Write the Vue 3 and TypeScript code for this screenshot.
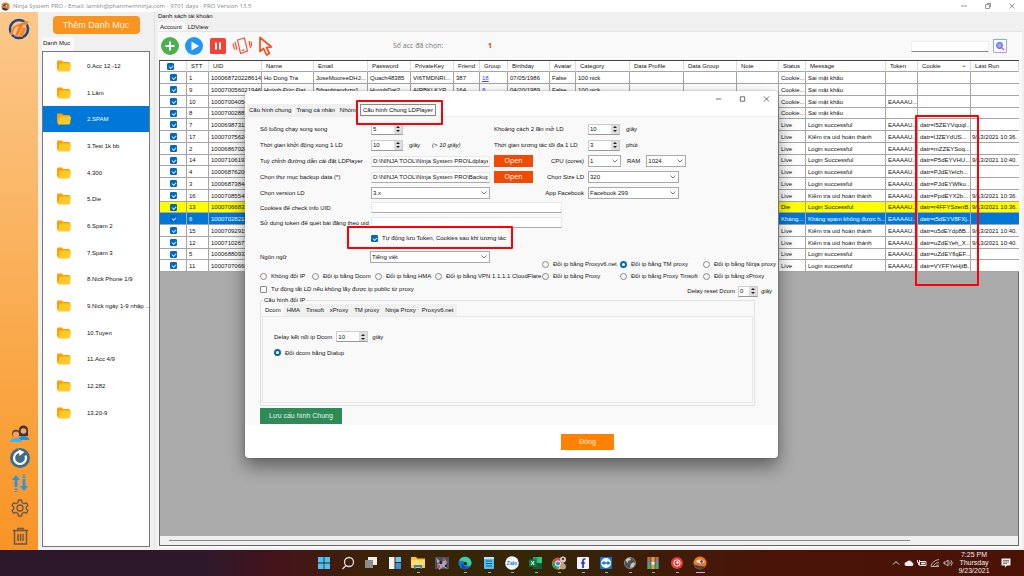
<script setup lang="ts">
import { ref } from 'vue'

interface Row {
  stt: number
  uid: string
  status: string
  message: string
  token: string
  cookie: string
  lastRun: string
  extra?: string[]
  state?: string
}

const T = 'EAAAAU...'
const OK = 'Login successful'
const DONE = 'Kiểm tra uid hoàn thành'
const BAD = 'Sai mật khẩu'

const headers = ['STT', 'UID', 'Name', 'Email', 'Password', 'PrivateKey', 'Friend', 'Group', 'Birthday', 'Avatar', 'Category', 'Data Profile', 'Data Group', 'Note', 'Status', 'Message', 'Token', 'Cookie', 'Last Run']
const widths = [27, 22, 53, 52, 54, 43, 43, 26, 28, 42, 26, 54, 54, 53, 42, 27, 80, 32, 53, 48]

const rows: Row[] = [
  { stt: 1, uid: '100068720228614', status: 'Cookie...', message: BAD, token: '', cookie: '', lastRun: '', extra: ['Ho Dong Tra', 'JoseMooreeDHJ...', 'Quach48385', 'VI6TMDNRI...', '387', '18', '07/05/1986', 'False', '100 nick'] },
  { stt: 9, uid: '100070056021946', status: 'Cookie...', message: BAD, token: '', cookie: '', lastRun: '', extra: ['Huỳnh Đức Đạt', '5thanhtandyzn1', 'HuynhDat2', 'AIRBKLKYP...', '164', '8', '04/20/1989', 'False', '100 nick'] },
  { stt: 10, uid: '10007004054', status: 'Cookie...', message: BAD, token: T, cookie: '', lastRun: '' },
  { stt: 8, uid: '10007002887', status: 'Cookie...', message: BAD, token: '', cookie: '', lastRun: '' },
  { stt: 7, uid: '10006987311', status: 'Live', message: OK, token: T, cookie: 'datr=I5ZEYVquqI...', lastRun: '' },
  { stt: 17, uid: '10007075624', status: 'Live', message: DONE, token: T, cookie: 'datr=lJZEYdUS...', lastRun: '9/13/2021 10:36.' },
  { stt: 2, uid: '10006867028', status: 'Live', message: OK, token: T, cookie: 'datr=mZZEYSoq...', lastRun: '' },
  { stt: 14, uid: '10007106193', status: 'Live', message: 'Login Successful', token: T, cookie: 'datr=P5dEYVHU...', lastRun: '9/13/2021 10:40.' },
  { stt: 4, uid: '10006876204', status: 'Live', message: OK, token: T, cookie: 'datr=PJdEYeIch...', lastRun: '' },
  { stt: 3, uid: '10006873844', status: 'Live', message: OK, token: T, cookie: 'datr=PJdEYWfku...', lastRun: '' },
  { stt: 16, uid: '10007085548', status: 'Live', message: DONE, token: T, cookie: 'datr=PpdEYX2b...', lastRun: '9/13/2021 10:36.' },
  { stt: 13, uid: '10007066831', status: 'Die', message: 'Login Successful', token: T, cookie: 'datr=r4FFYSzenB...', lastRun: '9/13/2021 10:36.', state: 'dead' },
  { stt: 6, uid: '10007028212', status: 'Kháng...', message: 'Kháng spam không được h...', token: T, cookie: 'datr=t5dEYV8FXj...', lastRun: '', state: 'picked' },
  { stt: 15, uid: '10007092915', status: 'Live', message: DONE, token: T, cookie: 'datr=u5dEYdp8B...', lastRun: '9/13/2021 10:40.' },
  { stt: 12, uid: '10007102677', status: 'Live', message: DONE, token: T, cookie: 'datr=uZdEYeh_X...', lastRun: '9/13/2021 10:40.' },
  { stt: 5, uid: '10006880932', status: 'Live', message: OK, token: T, cookie: 'datr=uZdEYflqEF...', lastRun: '' },
  { stt: 11, uid: '10007070668', status: 'Live', message: OK, token: T, cookie: 'datr=VYFFYeHjtB...', lastRun: '' },
]

function cells(r: Row): string[] {
  const mid = r.extra ?? Array(9).fill('')
  return [String(r.stt), r.uid, ...mid, '', '', '', r.status, r.message, r.token, r.cookie, r.lastRun]
}

const categories = ['0.Acc 12 -12', '1.Lâm', '2.SPAM', '3.Test 1k bb', '4.300', '5.Die', '6.Spam 2', '7.Spam 3', '8.Nick Phone 1/9', '9.Nick ngày 1-9 nhập ...', '10.Tuyen', '11.Acc 4/9', '12.282', '13.20-9']
const category = ref('2.SPAM')

const ipTop = ['Đổi ip bằng Proxyv6.net', 'Đổi ip bằng TM proxy', 'Đổi ip bằng Ninja proxy']
const ipBottom = ['Không đổi IP', 'Đổi ip bằng Dcom', 'Đổi ip bằng HMA', 'Đổi ip bằng VPN 1.1.1.1 CloudFlare', 'Đổi ip bằng Proxy', 'Đổi ip bằng Proxy Tinsoft', 'Đổi ip bằng xProxy']
const ipMode = ref('Đổi ip bằng TM proxy')

const ipTabs = ['Dcom', 'HMA', 'Tinsoft', 'xProxy', 'TM proxy', 'Ninja Proxy', 'Proxyv6.net']
const cfgTabs = ['Cấu hình chung', 'Trang cá nhân', 'Nhóm', 'Cấu hình Chung LDPlayer']

const form = ref({
  threads: 5,
  startDelay: 10,
  openGap: 10,
  maxTime: 3,
  ldPath: 'D:\\NINJA TOOL\\Ninja System PRO\\Ldplayer_',
  backup: 'D:\\NINJA TOOL\\Ninja System PRO\\Backup',
  cookies: '',
  tokenUid: '',
  autoSave: true,
  autoOff: false,
  resetDelay: 0,
  dcomDelay: 10,
})
</script>

<template>
  <div class="screen">
    <header class="titlebar">
      <svg class="app-ico" viewBox="0 0 10 10"><circle cx="5" cy="5" r="4.5" fill="#ef7a1c" /><path d="M1 6a4 4 0 0 0 7 2L5 7z" fill="#27396b" /><path d="M2 4q3-3 6 0l-3 1z" fill="#3b3d5c" /><circle cx="6" cy="4" r="1" fill="#fff" /></svg>
      <h1>Ninja System PRO - Email: lamkh@phanmemninja.com - 9701 days - PRO Version 13.5</h1>
      <div class="win-ctl">
        <button aria-label="Minimize"><svg viewBox="0 0 8 8"><path d="M1 4h6" /></svg></button>
        <button aria-label="Restore"><svg viewBox="0 0 8 8"><path d="M1.500 2.500h4v4h-4zM3 1.500h3.500v3.500" /></svg></button>
        <button aria-label="Close"><svg viewBox="0 0 8 8"><path d="M1.500 1.500l5 5M6.500 1.500l-5 5" /></svg></button>
      </div>
    </header>

    <div class="body">
      <aside class="rail">
        <svg class="logo" viewBox="0 0 24 24"><circle cx="12" cy="12" r="9" fill="none" stroke="#1d4489" stroke-width="2.600" /><path d="M4 10.500L10 7.500 20 4l2 .5-2.500 3.500h-3L11 19H7.500l4-9.500-3 1L5 18H2.800L6 11z" fill="#f47b20" stroke="#fbc88b" stroke-width=".5" /><path d="M15.500 10.500h4.500L15.500 20h-4z" fill="#f58a2b" /></svg>
        <nav class="rail-nav">
          <button aria-label="Accounts"><svg viewBox="0 0 20 20"><circle cx="13.500" cy="7" r="4.600" fill="#49332e" /><path d="M9 8v5h9V8z" fill="#49332e" /><circle cx="13.500" cy="8" r="2.800" fill="#f3a878" /><path d="M8 17q1-4 5.500-4t6 4z" fill="#1696ea" /><circle cx="6" cy="10.500" r="3.800" fill="#5b3b28" /><circle cx="6" cy="11.500" r="3" fill="#f7a35e" /><path d="M0 19q0-4 6-4t6 4z" fill="#3fb4ef" /></svg></button>
          <button aria-label="Refresh"><svg viewBox="0 0 20 20"><circle cx="10" cy="10" r="10" fill="#3f6b86" /><path d="M12 4.300A6 6 0 1 0 15.500 7.500" fill="none" stroke="#fff" stroke-width="2.200" /><path d="M8.500 1.500l6 2.500-5 4z" fill="#fff" /></svg></button>
          <button aria-label="Transfer"><svg viewBox="0 0 20 20" fill="#2196f3"><path d="M6 2l4 5H7.400v7H4.600V7H2zM4.600 15.500h2.800v1.500H4.600zM4.600 18h2.800v1H4.600zM14 18l-4-5h2.600V6h2.800v7H18zM12.600 3.500h2.800V5h-2.800zM12.600 1.500h2.800v1h-2.800z" /></svg></button>
          <button aria-label="Settings"><svg viewBox="0 0 20 20" fill="none" stroke="#6a5650" stroke-width="1.300" stroke-linejoin="round"><path d="M8.500 2h3l.5 2.500 2 1.200 2.500-.9L18 7.500 16.200 9v2L18 12.500l-1.500 2.700-2.500-.9-2 1.200-.5 2.500h-3L8 15.500l-2-1.200-2.500.9L2 12.500 3.800 11V9L2 7.500l1.500-2.700 2.500.9 2-1.200z" /><circle cx="10" cy="10" r="3" /></svg></button>
          <button class="trash" aria-label="Delete"><svg viewBox="0 0 20 20" fill="none" stroke="#6a5650" stroke-width="1.400"><path d="M3 4.500h15M8 4.500V2.500h5v2M4.500 4.500v13.500h12V4.500M8 8v7M10.500 8v7M13 8v7" /></svg></button>
        </nav>
      </aside>

      <section class="cats">
        <button class="add-cat">Thêm Danh Mục</button>
        <h2 class="cat-tab">Danh Mục</h2>
        <ul class="cat-list">
          <li v-for="c in categories" :key="c">
            <button :class="{ on: c === category }" @click="category = c">
              <svg viewBox="0 0 14 12"><path d="M0 1.500Q0 .5 1 .5h4L6.500 2H12q1 0 1 1v7H1q-1 0-1-1z" fill="#ffa000" /><path d="M2.500 4.500q.3-1 1.300-1H13q1.200 0 1 1L13 10.500q-.2 1-1.200 1H.8z" fill="#ffca28" /></svg>
              <span>{{ c }}</span>
            </button>
          </li>
        </ul>
      </section>

      <main class="main">
        <h2 class="group-title">Danh sách tài khoản</h2>
        <div class="tabs main-tabs">
          <button class="on">Account</button>
          <button>LDView</button>
        </div>
        <div class="page">
          <div class="toolbar">
            <button aria-label="Add"><svg viewBox="0 0 20 20"><circle cx="10" cy="10" r="9" fill="#4caf50" /><path d="M10 5.500v9M5.500 10h9" stroke="#fff" stroke-width="2" /></svg></button>
            <button aria-label="Run"><svg viewBox="0 0 20 20"><circle cx="10" cy="10" r="9" fill="#2196f3" /><path d="M7.500 5.500v9l7.500-4.500z" fill="#fff" /></svg></button>
            <button aria-label="Pause"><svg viewBox="0 0 20 20"><rect x="2" y="2" width="16" height="16" rx="1.500" fill="#f44336" /><path d="M8 6.500v7M12 6.500v7" stroke="#fff" stroke-width="2" /></svg></button>
            <button aria-label="Shake phone"><svg viewBox="0 0 20 20" fill="none" stroke="#f4553c" stroke-width="1.200"><path d="M5.500 4l7-2 3 13-7 2.500zM9.500 14.500l3-.7M3 6l2 8M1 7.500l1.500 6M17 5l1.500 7M19 5.500l.8 5" /></svg></button>
            <button aria-label="Pointer"><svg viewBox="0 0 20 20" fill="none" stroke="#f4511e" stroke-width="1.700" stroke-linejoin="round"><path d="M4 1.500v14l3.500-3 3 6.500 3-1.500-3-6 5-.5z" /></svg></button>
            <p class="count">Số acc đã chọn:</p>
            <output>1</output>
            <input class="search" type="text" aria-label="Search" />
            <button class="find" aria-label="Find"><svg viewBox="0 0 14 14" fill="none"><rect x=".5" y=".5" width="13" height="13" rx=".5" stroke="#b59cf0" /><path d="M.5 8V.5h13V5" stroke="#6fb5e6" /><circle cx="6.500" cy="6.500" r="2.800" fill="#a9a2f5" stroke="#6672ee" stroke-width="1.200" /><path d="M9 9l2 2" stroke="#a663e8" stroke-width="1.400" /></svg></button>
          </div>

          <div class="grid-box">
            <table>
              <colgroup><col v-for="(w, i) in widths" :key="i" :style="{ width: w + 'px' }" /></colgroup>
              <thead>
                <tr>
                  <th><input type="checkbox" checked aria-label="Select all" /></th>
                  <th v-for="h in headers" :key="h">{{ h }}<i v-if="h === 'Cookie'" class="sort"></i></th>
                </tr>
              </thead>
              <tbody>
                <tr v-for="r in rows" :key="r.stt" :class="r.state">
                  <td class="tick"><input type="checkbox" checked :aria-label="'Select ' + r.stt" /></td>
                  <td v-for="(v, i) in cells(r)" :key="i"><a v-if="i === 7 && v" href="#">{{ v }}</a><template v-else>{{ v }}</template></td>
                </tr>
              </tbody>
            </table>
            <div class="hscroll"><span></span></div>
          </div>
        </div>
      </main>
    </div>

    <section class="dialog" role="dialog" aria-label="Cấu hình">
      <div class="dlg-bar">
        <button aria-label="Minimize"><svg viewBox="0 0 8 8"><path d="M1 4h6" /></svg></button>
        <button aria-label="Maximize"><svg viewBox="0 0 8 8"><path d="M1.500 1.500h5v5h-5z" /></svg></button>
        <button aria-label="Close"><svg viewBox="0 0 8 8"><path d="M1 1l6 6M7 1L1 7" /></svg></button>
      </div>
      <div class="tabs dlg-tabs">
        <button v-for="(t, i) in cfgTabs" :key="t" :class="{ on: i === 3, focus: i === 3 }"><span>{{ t }}</span></button>
      </div>
      <div class="pane">
        <div class="form">
          <label for="threads">Số luồng chạy song song</label>
          <div class="cell"><span class="spin"><input id="threads" v-model="form.threads" type="number" /><span><button aria-label="Up"></button><button aria-label="Down"></button></span></span></div>
          <label for="gap">Khoảng cách 2 lần mở LD</label>
          <div class="cell"><span class="spin"><input id="gap" v-model="form.openGap" type="number" /><span><button aria-label="Up"></button><button aria-label="Down"></button></span></span><span>giây</span></div>

          <label for="start">Thời gian khởi động xong 1 LD</label>
          <div class="cell"><span class="spin"><input id="start" v-model="form.startDelay" type="number" /><span><button aria-label="Up"></button><button aria-label="Down"></button></span></span><span>giây</span><em>(&gt; 10 giây)</em></div>
          <label for="max">Thời gian tương tác tối đa 1 LD</label>
          <div class="cell"><span class="spin"><input id="max" v-model="form.maxTime" type="number" /><span><button aria-label="Up"></button><button aria-label="Down"></button></span></span><span>phút</span></div>

          <label for="path">Tuỳ chỉnh đường dẫn cài đặt LDPlayer</label>
          <input id="path" v-model="form.ldPath" class="text" type="text" />
          <div class="cell split"><button class="open">Open</button><label for="cpu">CPU (cores)</label></div>
          <div class="cell"><span class="sel cpu"><select id="cpu"><option>1</option></select><svg viewBox="0 0 6 4"><path d="M.5.5L3 3 5.500.5" /></svg></span><label for="ram">RAM</label><span class="sel ram"><select id="ram"><option>1024</option></select><svg viewBox="0 0 6 4"><path d="M.5.5L3 3 5.500.5" /></svg></span></div>

          <label for="backup">Chọn thư mục backup data (*)</label>
          <input id="backup" v-model="form.backup" class="text" type="text" />
          <div class="cell split"><button class="open">Open</button><label for="size">Chọn Size LD</label></div>
          <span class="sel wide"><select id="size"><option>320</option></select><svg viewBox="0 0 6 4"><path d="M.5.5L3 3 5.500.5" /></svg></span>

          <label for="ver">Chọn version LD</label>
          <span class="sel"><select id="ver"><option>3.x</option></select><svg viewBox="0 0 6 4"><path d="M.5.5L3 3 5.500.5" /></svg></span>
          <label class="right" for="fb">App Facebook</label>
          <span class="sel wide"><select id="fb"><option>Facebook 299</option></select><svg viewBox="0 0 6 4"><path d="M.5.5L3 3 5.500.5" /></svg></span>

          <label for="ck">Cookies để check info UID</label>
          <input id="ck" v-model="form.cookies" class="text long" type="text" />
          <label for="tk">Sử dụng token để quét bài đăng theo uid</label>
          <input id="tk" v-model="form.tokenUid" class="text long" type="text" />
          <label class="opt auto"><input v-model="form.autoSave" type="checkbox" />Tự động lưu Token, Cookies sau khi tương tác</label>
        </div>

        <div class="ips">
          <div class="lang">
            <label for="lang">Ngôn ngữ</label>
            <span class="sel"><select id="lang"><option>Tiếng việt</option></select><svg viewBox="0 0 6 4"><path d="M.5.5L3 3 5.500.5" /></svg></span>
          </div>
          <label v-for="o in ipTop" :key="o" class="opt top"><input v-model="ipMode" type="radio" name="ip" :value="o" />{{ o }}</label>
          <label v-for="o in ipBottom" :key="o" class="opt"><input v-model="ipMode" type="radio" name="ip" :value="o" />{{ o }}</label>
        </div>

        <div class="reset">
          <label class="opt"><input v-model="form.autoOff" type="checkbox" />Tự động tắt LD nếu không lấy được ip public từ proxy</label>
          <div class="cell"><label for="reset">Delay reset Dcom</label><span class="spin small"><input id="reset" v-model="form.resetDelay" type="number" /><span><button aria-label="Up"></button><button aria-label="Down"></button></span></span><span>giây</span></div>
        </div>

        <fieldset>
          <legend>Cấu hình đổi IP</legend>
          <div class="tabs ip-tabs"><button v-for="(t, i) in ipTabs" :key="t" :class="{ on: i === 0 }">{{ t }}</button></div>
          <div class="ip-page">
            <div class="cell"><label for="dcom">Delay kết nối ip Dcom</label><span class="spin"><input id="dcom" v-model="form.dcomDelay" type="number" /><span><button aria-label="Up"></button><button aria-label="Down"></button></span></span><span>giây</span></div>
            <label class="opt"><input type="radio" name="dial" checked />Đổi dcom bằng Dialup</label>
          </div>
        </fieldset>
        <button class="save">Lưu cấu hình Chung</button>
      </div>
      <footer><button class="close">Đóng</button></footer>
    </section>

    <div class="mark mark-tab"></div>
    <div class="mark mark-auto"></div>
    <div class="mark mark-cookie"></div>

    <div class="taskbar">
      <div></div>
      <div class="apps">
        <button aria-label="Start"><svg viewBox="0 0 14 14" fill="#4cc2f5"><path d="M1 1h5.600v5.600H1zM7.400 1H13v5.600H7.400zM1 7.400h5.600V13H1zM7.400 7.400H13V13H7.400z" /></svg></button>
        <button aria-label="Search"><svg viewBox="0 0 14 14" fill="none" stroke="#ddd" stroke-width="1.300"><circle cx="8" cy="6" r="4.500" /><path d="M5 9.500L1.500 13" /></svg></button>
        <button aria-label="Task view"><svg viewBox="0 0 14 14"><path d="M4 1h9v8H4z" fill="#eee" /><path d="M1 4h8v8H1z" fill="#8c8c8c" /></svg></button>
        <button aria-label="Widgets"><svg viewBox="0 0 14 14"><path d="M1 1h5.500v12H1z" fill="#f2f2f2" /><path d="M7.500 1H13v5H7.500z" fill="#6cc9f5" /><path d="M7.500 7H13v6H7.500z" fill="#2f96dd" /></svg></button>
        <button class="run" aria-label="Explorer"><svg viewBox="0 0 14 14"><path d="M0 1h5l1.500 1.500H14V12H0z" fill="#f8c33c" /><path d="M0 4h14v5H0z" fill="#ffdc6b" /><path d="M3 9h8v4H9.500v-2h-5v2H3z" fill="#2386d8" /></svg></button>
        <button aria-label="Game"><svg viewBox="0 0 14 14"><path d="M0 1h14v12H0z" fill="#544b5c" /><path d="M1 2l4 3-3 3 5-1 2-5 3 4-2 4 3 3-5-2-4 3z" fill="#a5a0b8" /><path d="M2 9h3v3H2zM8 3h2v2H8z" fill="#b45a52" /><path d="M5 5h2v3H5zM10 9h2v2h-2z" fill="#1c2335" /></svg></button>
        <button class="run" aria-label="Edge"><svg viewBox="0 0 14 14"><circle cx="7" cy="7" r="6.500" fill="#1879cf" /><path d="M1 5a6.500 6.500 0 0 1 12.500 2c0 3-4 3.500-5 2 1.500-3-4-5-7.500-4z" fill="#3fcf9c" /><path d="M5.500 7c-1 3 2 5 6 4A6.500 6.500 0 0 1 5 13C2 10 3 7 5.500 7z" fill="#0b509e" /><circle cx="7.500" cy="7.500" r="1.600" fill="#2c220a" /></svg></button>
        <button class="run" aria-label="Notepad"><svg viewBox="0 0 14 14"><rect x="2" y="1" width="10" height="12" rx="1" fill="#4fc1f0" /><path d="M4 5h6M4 7.500h6M4 10h6" stroke="#17608f" /><path d="M2 1h10v2H2z" fill="#bfe6f7" /></svg></button>
        <button class="run" aria-label="Zalo"><svg viewBox="0 0 14 14"><circle cx="7" cy="7" r="6.800" fill="#f4f8ff" /><text x="7" y="8.800" text-anchor="middle" font-size="5" font-weight="700" fill="#0f6cf2">Zalo</text></svg></button>
        <button class="run" aria-label="Excel"><svg viewBox="0 0 14 14"><path d="M4 1h9v12H4z" fill="#21a366" /><path d="M8.500 1H13v6H8.500z" fill="#33c481" /><path d="M4 7h9v6H4z" fill="#145c35" /><path d="M0 3.500h7.500v7H0z" fill="#107c41" /><path d="M2.200 5l3 4M5.200 5l-3 4" stroke="#fff" /></svg></button>
        <button class="run" aria-label="Chrome"><svg viewBox="0 0 14 14"><circle cx="6" cy="7.500" r="6" fill="#dd4b3e" /><path d="M.5 5A6 6 0 0 0 6 13.500L8 9z" fill="#35a355" /><path d="M12 7.500A6 6 0 0 1 6 13.500L8.500 7z" fill="#f8cf3c" /><circle cx="6" cy="7.500" r="2.600" fill="#4484f0" stroke="#fff" /><circle cx="11" cy="3.500" r="3" fill="#d8d1c9" /><circle cx="11" cy="10.500" r="3" fill="#b8a08c" /><circle cx="11" cy="3" r="1.300" fill="#57453d" /></svg></button>
        <button class="run" aria-label="Facebook"><svg viewBox="0 0 14 14"><rect x="1" y="1" width="12" height="12" rx="1" fill="#f4f4fb" /><path d="M9.500 3H8.500Q7 3 7 4.500V12M5 7h4" fill="none" stroke="#2a2fd0" stroke-width="1.700" /></svg></button>
        <button class="run" aria-label="TeamViewer"><svg viewBox="0 0 14 14"><rect x="1" y="1" width="12" height="12" rx="1" fill="#0e78d8" /><circle cx="7" cy="7" r="5" fill="#fff" /><path d="M2.500 7l3-2.200v1.500h3V4.800l3 2.200-3 2.200V7.700h-3v1.500z" fill="#0e78d8" /></svg></button>
        <button class="run" aria-label="Globe"><svg viewBox="0 0 14 14"><circle cx="7" cy="7" r="5.500" fill="#4e4e4e" stroke="#999" stroke-width=".8" /><path d="M2.500 4q2-2.500 4.500-2l1 2-3 1v2l3 1 3-2 1 2.500q-2 4-5 3l1-3-4-2z" fill="#c8c8c8" /></svg></button>
        <button class="run" aria-label="WinRAR"><svg viewBox="0 0 14 14"><path d="M1 1h12v4H1z" fill="#a8443c" /><path d="M1 5h12v4H1z" fill="#3574b4" /><path d="M1 9h12v4H1z" fill="#3c8a46" /><path d="M5.500 1h3v12h-3z" fill="#d8a93e" /><path d="M3 1v12M11 1v12" stroke="#d0a85a" stroke-width=".8" /><path d="M5.500 6h3v2.500h-3z" fill="#eee" /></svg></button>
        <button class="run" aria-label="Recorder"><svg viewBox="0 0 14 14"><circle cx="7" cy="7" r="6" fill="#ec3838" /><circle cx="7" cy="7" r="3.200" fill="none" stroke="#fff" /><circle cx="7.500" cy="6.500" r="1.200" fill="#fff" /></svg></button>
        <button class="run now" aria-label="Ninja System"><svg viewBox="0 0 14 14"><circle cx="7" cy="7" r="6.500" fill="#ef7a1c" /><path d="M1 8.500a6.500 6.500 0 0 0 11.500 2L7 10z" fill="#39445f" /><path d="M2.500 5.500Q7 1.500 12 6L7 7.500z" fill="#dfe3ea" /><circle cx="8.500" cy="5.500" r="1.300" fill="#3b3d5c" /></svg></button>
      </div>
      <div class="tray">
        <svg viewBox="0 0 10 10" fill="none" stroke="#ddd"><path d="M2 6.500L5 3.500l3 3" /></svg>
        <svg viewBox="0 0 10 10" fill="#eee"><path d="M2.500 8a2 2 0 0 1 0-4 3 3 0 0 1 5.500.5A1.800 1.800 0 0 1 8 8z" /></svg>
        <svg viewBox="0 0 10 10" fill="none" stroke="#ddd"><path d="M2.500 3.500H9v4H2.500z" /><path d="M4 4.500h4v2H4z" fill="#ddd" stroke="none" /><path d="M.5 2v2.500h2V2M1.500 4.500V7" /></svg>
        <svg viewBox="0 0 10 10" fill="none" stroke="#bbb" stroke-width=".9"><path d="M1 8.500Q2 2.500 9 1.500M3.500 8.500Q4 5 9 4.500M6 8.500Q6 7 9 7M1 8.500h8" /></svg>
        <svg viewBox="0 0 10 10" fill="none" stroke="#ddd" stroke-width=".8"><path d="M1 4h1.500L5 2v6L2.500 6H1zM6.500 3.500q1.500 1.500 0 3M8 2.200q2.500 2.800 0 5.600" /></svg>
        <time><span>7:25 PM</span><span>Thursday</span><span>9/23/2021</span></time>
        <svg class="note" viewBox="0 0 10 10"><path d="M.5.500h9v7H6L4 9.500v-2H.5z" fill="#eee" /><path d="M2 2.500h6M2 4h6M2 5.500h4" stroke="#5a2a1c" stroke-width=".6" /></svg>
      </div>
    </div>
  </div>
</template>

<style>
body { margin: 0; }
</style>

<style scoped>
.screen {
  position: relative;
  display: flex;
  flex-direction: column;
  min-height: 100vh;
  overflow: hidden;
  background: #f0f0f0;
  color: #111;
  font-family: "Liberation Sans", Arial, sans-serif;
  font-size: 6px;
  line-height: 8px;
  white-space: nowrap;
}
.screen * { box-sizing: border-box; }
button, input, select { font: inherit; color: inherit; margin: 0; padding: 0; border: 0; background: none; border-radius: 0; }
button { cursor: pointer; }
h1, h2, p, ul { margin: 0; padding: 0; font: inherit; list-style: none; }
svg { display: block; flex: none; }

.titlebar { display: flex; align-items: center; gap: 3px; height: 12px; padding: 0 8px 0 1px; background: #fff; color: #888; }
.titlebar h1 { flex: 1; font-family: "Open Sans", sans-serif; font-size: 6px; }
.app-ico { width: 9px; height: 9px; }
.win-ctl { display: flex; gap: 16px; }
.win-ctl svg, .dlg-bar svg { width: 8px; height: 8px; fill: none; stroke: #999; stroke-width: 1; }

.body { flex: 1; display: flex; min-height: 0; }
.rail { display: flex; flex-direction: column; align-items: center; justify-content: space-between; width: 38px; padding: 5px 0 4px; background: linear-gradient(#fbc88b, #f9a23c 75%, #f79426); }
.logo { width: 24px; height: 24px; }
.rail-nav { display: flex; flex-direction: column; gap: 5px; padding-left: 2px; }
.rail-nav svg { width: 20px; height: 20px; }
.rail-nav .trash { margin-top: 3px; }

.cats { display: flex; flex-direction: column; align-items: flex-start; width: 117px; padding: 4px 4px 3px; border-right: 1px solid #e2e2e2; }
.add-cat { align-self: center; width: 87px; height: 18px; border-radius: 4px; background: #f8941f; color: #fff3e0; font-size: 9px; }
.cat-tab { height: 17px; padding: 5px 4px 0 1px; background: linear-gradient(transparent 3px, #f9f9f9 3px); }
.cat-list { flex: 1; align-self: stretch; border: 1px solid #777; background: #fff; }
.cat-list button { display: flex; align-items: center; gap: 16px; width: 100%; height: 27px; padding-left: 14px; }
.cat-list li:nth-child(3n) button { height: 26px; }
.cat-list .on { background: #0078d7; color: #fff; }
.cat-list svg { width: 14px; height: 12px; }

.main { flex: 1; display: flex; flex-direction: column; min-width: 0; padding: 0 2px 2px 3px; }
.group-title { height: 10px; }
.tabs { display: flex; align-items: stretch; }
.tabs button { background: #f0f0f0; }
.tabs .on { background: #f9f9f9; }
.main-tabs { height: 9px; }
.main-tabs button { padding: 0 2px; }
.main-tabs .on { padding: 0 4px 0 2px; }
.page { flex: 1; display: flex; flex-direction: column; padding: 0 3px 2px 1px; background: #f9f9f9; border-top: 1px solid #e5e5e5; }
.toolbar { display: flex; align-items: center; gap: 4px; height: 28px; padding: 0 12px 0 1px; }
.toolbar svg { width: 20px; height: 20px; }
.count { width: 91px; margin-left: 113px; color: #777; font-family: "Open Sans", sans-serif; font-size: 7px; }
.toolbar output { flex: 1; color: #f03010; font-weight: 700; font-family: "Open Sans", sans-serif; font-size: 7px; }
.search { width: 78px; height: 11px; background: #fff; border: 1px solid #eee; border-bottom-color: #888; }
.toolbar .find svg { width: 14px; height: 14px; }

.grid-box { flex: 1; display: flex; flex-direction: column; border: 1px solid #666; border-top: 1px solid #444; background: #ababab; }
table { width: 100%; table-layout: fixed; border-collapse: separate; border-spacing: 0; background: #fff; }
th, td { height: 12px; padding: 0 0 0 2px; overflow: hidden; border-right: 1px solid #a5a5a5; border-bottom: 1px solid #a5a5a5; text-align: left; font-weight: 400; line-height: 8px; }
th { height: 11px; padding-left: 4px; border-right-color: #ddd; }
td:last-child { padding-left: 1px; border-right: 0; }
tbody tr:nth-child(4n) td { height: 11px; }
th:first-child { padding-left: 7px; }
td.tick { padding-left: 10px; }
.dead td { background: #ff0; }
.picked td { background: #0078d7; color: #fff; }
td a { color: #44f; }
.sort { float: right; margin: 3px 4px 0 0; border: 2px solid transparent; border-top: 0; border-bottom: 2px solid #999; }
.hscroll { margin-top: auto; height: 9px; padding: 4px 108px 0 9px; background: #f0f0f0; }
.hscroll span { display: block; height: 1px; background: #888; }

input[type="checkbox"], input[type="radio"] { appearance: none; display: block; position: relative; width: 7px; height: 7px; flex: none; border: 1px solid #888; border-radius: 1px; background: #fff; }
input[type="radio"] { border-radius: 50%; background: #fafafa; }
input[type="checkbox"]:checked { border-color: #0067c0; background: #0067c0; }
input[type="checkbox"]:checked::after { content: ""; position: absolute; left: 1px; top: 1px; width: 3px; height: 2px; border: solid #cfe4f7; border-width: 0 0 1px 1px; transform: rotate(-45deg); }
input[type="radio"]:checked { border: 2px solid #0067c0; background: #fff; }

.dialog { position: absolute; left: 245px; top: 91px; width: 533px; border-radius: 4px; background: #fff; box-shadow: 0 8px 18px rgba(0, 0, 0, .45), 0 0 2px rgba(0, 0, 0, .35); }
.dlg-bar { display: flex; justify-content: flex-end; gap: 17px; height: 12px; padding: 3px 8px 0; }
.dlg-bar svg { stroke: #333; stroke-width: .8; width: 7px; height: 8px; }
.dlg-tabs { height: 13px; padding-left: 2px; gap: 1px; }
.dlg-tabs button { margin-top: 1px; padding: 0 2px; }
.dlg-tabs .on { margin-top: 0; padding: 1px; }
.focus span { display: block; border: 1px solid #888; padding: 1px 2px; }
.pane { padding: 4px 3px 1px 15px; background: #f9f9f9; border-top: 1px solid #eee; }
.form { display: grid; grid-template-columns: 107px 119px 90px 1fr; grid-template-rows: 16px 16px 16px 16px 15px 15px 15px 16px; column-gap: 4px; align-items: center; }
.cell { display: flex; align-items: center; gap: 6px; }
.split { justify-content: space-between; }
.right { text-align: right; }
.cell em { margin-left: 6px; }
.spin { display: flex; width: 32px; height: 11px; border: 1px solid #ccc; border-bottom-color: #999; background: #fff; }
.spin.small { width: 20px; }
.spin input { flex: 1; width: 0; min-width: 0; padding-left: 1px; appearance: textfield; }
.spin input::-webkit-inner-spin-button { display: none; }
.spin > span { display: flex; flex-direction: column; justify-content: center; gap: 2px; width: 8px; background: #dedede; align-items: center; }
.spin > span button { width: 4px; height: 2px; border: 2px solid transparent; border-top: 0; border-bottom: 2px solid #222; }
.spin > span button:last-child { border-bottom: 0; border-top: 2px solid #222; }
.text { width: 100%; height: 11px; padding: 0 1px; background: #fff; border: 1px solid #e8e8e8; border-bottom-color: #aaa; }
.form label[for="tk"] { grid-column: 1; }
.long { grid-column: 2 / 4; width: 191px; }
.sel { position: relative; display: block; height: 12px; border: 1px solid #aaa; background: #fff; }
.sel select { display: block; appearance: none; width: 100%; height: 10px; padding: 0 10px 0 1px; }
.sel svg { position: absolute; right: 2px; top: 3px; width: 6px; height: 4px; fill: none; stroke: #555; stroke-width: .8; pointer-events: none; }
.wide { width: 91px; }
.cpu { width: 33px; }
.ram { width: 40px; }
.open { width: 39px; height: 12px; background: #f04a05; color: #fff; font-family: "Open Sans", sans-serif; font-size: 7px; }
.opt { display: flex; align-items: center; gap: 4px; }
.form .auto { grid-column: 2 / 5; }

.ips { display: grid; grid-template-columns: 52px 63px 60px 107px 78px 83px 1fr; grid-template-rows: 24px 12px; align-items: center; }
.lang { grid-column: 1 / 5; align-self: start; display: flex; align-items: center; height: 21px; }
.lang label { width: 110px; }
.lang .sel { width: 120px; }
.opt.top { align-self: end; height: 12px; }
.reset { display: flex; justify-content: space-between; align-items: center; height: 14px; }
.reset .cell { gap: 3px; padding: 4px 3px 0 0; }
fieldset { min-width: 0; height: 110px; margin: 0 20px 0 0; padding: 0 1px 2px; border: 1px solid #e2e2e2; display: flex; flex-direction: column; }
legend { margin-left: 1px; padding: 0 1px; }
.ip-tabs { height: 12px; }
.ip-tabs button { padding: 0 3px; }
.ip-page { flex: 1; display: flex; flex-direction: column; gap: 5px; padding: 14px 11px; border: 1px solid #e8e8e8; }
.ip-page .cell { gap: 4px; }
.ip-page .opt { height: 11px; }
.save { display: block; width: 82px; height: 16px; margin-top: 2px; background: #2e8b57; color: #e6f4ec; font-size: 7px; }
.close { width: 53px; height: 16px; background: #ff8205; color: #ffe9d2; font-size: 7px; }
.dialog footer { display: flex; justify-content: flex-end; height: 33px; padding: 9px 164px 0 0; }

.mark { position: absolute; border: 2px solid #fb0207; border-radius: 1px; pointer-events: none; }
.mark-tab { left: 356px; top: 100px; width: 87px; height: 25px; }
.mark-auto { left: 347px; top: 226px; width: 166px; height: 23px; }
.mark-cookie { left: 915px; top: 115px; width: 64px; height: 171px; }

.taskbar { display: grid; grid-template-columns: 1fr 390px 1fr; align-items: center; height: 26px; background: linear-gradient(90deg, #2d182b 0, #2d182b 20%, #45131a 27%, #3c2208 36%, #332707 52%, #3c1e08 62%, #4a1408 75%, #4a1206); color: #eee; }
.apps { display: flex; justify-content: space-between; }
.apps button { position: relative; width: 14px; height: 14px; }
.apps svg { width: 14px; height: 14px; }
.run::after { content: ""; position: absolute; left: 6px; top: 16px; width: 3px; height: 1px; background: #aaa; }
.now::after { left: 3px; width: 9px; background: #d9a8e8; }
.tray { display: flex; justify-content: flex-end; align-items: center; gap: 3px; padding-right: 13px; }
.tray svg { width: 10px; height: 10px; }
.tray time { display: flex; flex-direction: column; align-items: center; width: 34px; margin-left: 1px; font-size: 7px; }
.tray .note { margin-left: 7px; }
</style>
